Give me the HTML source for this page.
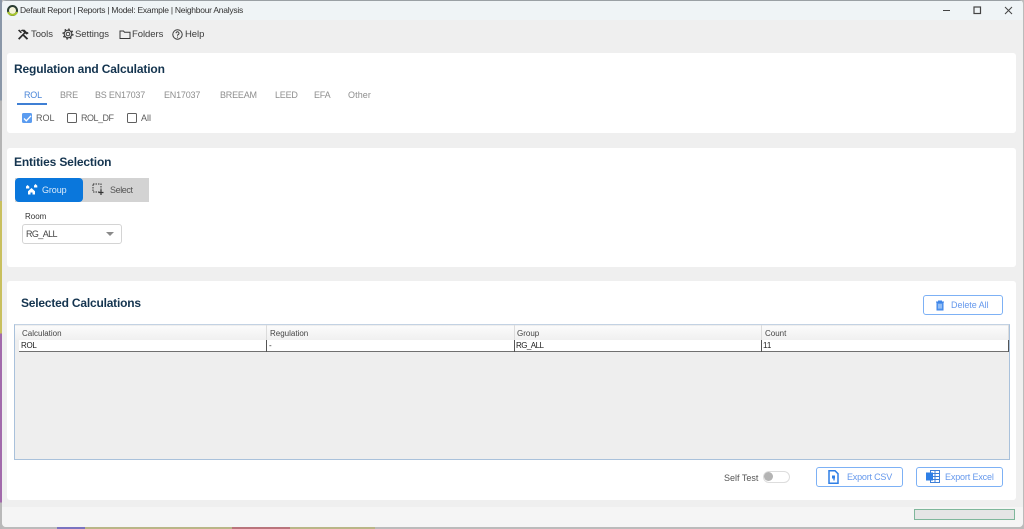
<!DOCTYPE html>
<html><head><meta charset="utf-8"><style>
html,body{margin:0;padding:0;width:1024px;height:529px;overflow:hidden;background:#bbb;font-family:"Liberation Sans",sans-serif}
.a{position:absolute;white-space:nowrap}
.card{position:absolute;left:7px;width:1009px;background:#fff;border-radius:3px}
.h{position:absolute;font-weight:bold;font-size:12px;letter-spacing:-.15px;color:#14344f;white-space:nowrap}
.tab{position:absolute;top:90px;font-size:9px;letter-spacing:-.2px;color:#8e8e8e;white-space:nowrap}
.cb{position:absolute;top:113px;width:8px;height:8px;border:1.5px solid #5f5f5f;border-radius:1.5px;background:#fff}
.t{position:absolute;font-size:9px;color:#5c5c5c;white-space:nowrap}
.m{position:absolute;top:29px;font-size:9.5px;letter-spacing:-.05px;color:#3c3c3c;white-space:nowrap}
.btn{position:absolute;background:#fff;border:1.2px solid #7db1f5;border-radius:3px;box-sizing:border-box;height:20px;color:#6598ec;font-size:9px;letter-spacing:-.05px;line-height:18px}
.th{position:absolute;top:329px;font-size:8px;color:#444;white-space:nowrap}
.td{position:absolute;top:341px;font-size:8px;letter-spacing:-.3px;color:#222;white-space:nowrap}
.v{position:absolute;width:1px;background:#555;top:340px;height:12px}
.vh{position:absolute;width:1px;background:#dcdcdc;top:325px;height:15px}
svg{position:absolute}
</style></head><body>
<div class="a" style="left:0;top:0;width:2px;height:529px;background:linear-gradient(#8a97a8 0,#8a97a8 19%,#b4b4b4 19%,#b4b4b4 38%,#c9c05e 38%,#c9c05e 63%,#a26aab 63%,#a26aab 95%,#b9b9b9 95%)"></div>
<div class="a" style="left:57px;top:527px;width:28px;height:2px;background:#7a74c0"></div>
<div class="a" style="left:85px;top:527px;width:147px;height:2px;background:#b9b687"></div>
<div class="a" style="left:232px;top:527px;width:58px;height:2px;background:#b9757c"></div>
<div class="a" style="left:290px;top:527px;width:85px;height:2px;background:#b9b687"></div>
<div class="a" style="left:2px;top:0;width:1021px;height:527px;background:#efefef;border-radius:4px;overflow:hidden">
  <div class="a" style="left:0;top:0;width:1021px;height:20px;background:#eff4f6;border-top:1px solid #9aa0a4;box-sizing:border-box"></div>
  <div class="a" style="left:0;top:507px;width:1021px;height:20px;background:#f5f5f5"></div>
</div>
<svg style="left:6px;top:4px" width="13" height="13" viewBox="0 0 13 13"><circle cx="6.500" cy="6.500" r="4.500" fill="#f3f3d8" stroke="#2a3d33" stroke-width="2"/><path d="M2 8a5 5 0 0 0 9 0" fill="none" stroke="#a8c92a" stroke-width="2"/></svg>
<div class="a" style="left:20px;top:5px;font-size:8.500px;letter-spacing:-.26px;color:#333">Default Report | Reports | Model: Example | Neighbour Analysis</div>
<svg style="left:940px;top:5px" width="75" height="12" viewBox="0 0 75 12" fill="none" stroke="#444"><path d="M3 5.500h7"/><rect x="34" y="2" width="6.500" height="6.500" stroke-width="1.200"/><path d="M65 2l7 7M72 2l-7 7" stroke-width="1"/></svg>

<svg style="left:17px;top:29px" width="12" height="11" viewBox="0 0 12 11" fill="#2c2c2c"><path d="M1 9.500L7 3.500 5.800 2.300 3.500 1.800 5 .6 7.600.8 10 3.200l1-.2L11.500 4.500 9.500 5.500 8.200 4.500 2.300 10.700z"/><path d="M5 6l1.200-1.200 5 4.700-1.400 1.300zM1 1.500L2.200.5 5 3.200 3.800 4.300z"/></svg>
<div class="m" style="left:31px">Tools</div>
<svg style="left:62px;top:28px" width="12" height="12" viewBox="0 0 12 12" fill="none" stroke="#383838"><circle cx="6" cy="6" r="1.800"/><circle cx="6" cy="6" r="3.800" stroke-width="1.100"/><circle cx="6" cy="6" r="4.900" stroke-width="1.300" stroke-dasharray="1.700 2.150"/></svg>
<div class="m" style="left:75px">Settings</div>
<svg style="left:119px;top:29px" width="12" height="11" viewBox="0 0 12 11" fill="none" stroke="#383838"><path d="M1 9.500V2h3.500l1 1.200H11v6.300z"/></svg>
<div class="m" style="left:132px">Folders</div>
<svg style="left:172px;top:29px" width="11" height="11" viewBox="0 0 11 11" fill="none" stroke="#383838"><circle cx="5.500" cy="5.500" r="4.700"/><path d="M4 4.200a1.500 1.500 0 1 1 2.200 1.400c-.5.3-.7.6-.7 1.100M5.500 7.600v1"/></svg>
<div class="m" style="left:185px">Help</div>

<div class="card" style="top:53px;height:80px"></div>
<div class="h" style="left:14px;top:62px">Regulation and Calculation</div>
<div class="tab" style="left:24px;color:#4b86d8">ROL</div>
<div class="a" style="left:17px;top:103px;width:30px;height:1.500px;background:#3f7fd4"></div>
<div class="tab" style="left:60px">BRE</div>
<div class="tab" style="left:95px">BS EN17037</div>
<div class="tab" style="left:164px">EN17037</div>
<div class="tab" style="left:220px">BREEAM</div>
<div class="tab" style="left:275px">LEED</div>
<div class="tab" style="left:314px">EFA</div>
<div class="tab" style="left:348px;letter-spacing:.1px">Other</div>
<div class="cb" style="left:22px;background:#5b9cf0;border-color:#5b9cf0"></div>
<svg style="left:23px;top:114px" width="9" height="9" viewBox="0 0 9 9" fill="none" stroke="#fff" stroke-width="1.300"><path d="M1 4.500l2.300 2.300L8 1.800"/></svg>
<div class="t" style="left:36px;top:113px">ROL</div>
<div class="cb" style="left:67px"></div>
<div class="t" style="left:81px;top:113px;letter-spacing:-.5px">ROL_DF</div>
<div class="cb" style="left:127px"></div>
<div class="t" style="left:141px;top:113px">All</div>

<div class="card" style="top:148px;height:119px"></div>
<div class="h" style="left:14px;top:155px">Entities Selection</div>
<div class="a" style="left:15px;top:178px;width:134px;height:24px;background:#d3d3d3"></div>
<div class="a" style="left:15px;top:178px;width:68px;height:24px;background:#0a77dc;border-radius:4px"></div>
<svg style="left:25px;top:183px" width="13" height="12" viewBox="0 0 13 12" fill="#fff"><path d="M6.500 5L10 8.200V11.500H7.500V9.500H5.500V11.500H3V8.200zM2.500 2L4.300 3.600V5.500H1V3.500zM10.500 1L12.300 2.700V4.500H9V2.600z"/></svg>
<div class="a" style="left:42px;top:185px;font-size:9px;letter-spacing:-.1px;color:#dcebfa">Group</div>
<svg style="left:92px;top:183px" width="13" height="13" viewBox="0 0 13 13" fill="none" stroke="#333"><rect x="1" y="1" width="8" height="8" stroke-dasharray="1.500 1"/><path d="M9 7v5M6.500 9.500h5" stroke-width="1.200"/></svg>
<div class="a" style="left:110px;top:185px;font-size:9px;letter-spacing:-.4px;color:#555">Select</div>
<div class="a" style="left:25px;top:212px;font-size:8px;color:#333">Room</div>
<div class="a" style="left:22px;top:224px;width:100px;height:20px;box-sizing:border-box;background:#fff;border:1px solid #d4d4d4;border-radius:3px"></div>
<div class="a" style="left:26px;top:229px;font-size:9px;letter-spacing:-.6px;color:#444">RG_ALL</div>
<div class="a" style="left:106px;top:232px;width:0;height:0;border-left:4px solid transparent;border-right:4px solid transparent;border-top:4px solid #8a8a8a"></div>

<div class="card" style="top:281px;height:219px"></div>
<div class="h" style="left:21px;top:296px;letter-spacing:-.2px">Selected Calculations</div>
<div class="btn" style="left:923px;top:295px;width:80px;padding-left:27px">Delete All</div>
<svg style="left:935px;top:300px" width="10" height="11" viewBox="0 0 10 11" fill="#5a9aef" stroke="#3f86e8"><path d="M1 2h8M3.500 2V1h3v1M2 2.500h6v7.500H2z"/><path d="M4 4v4.500M6 4v4.500" stroke="#cfe2fa"/></svg>

<div class="a" style="left:14px;top:324px;width:996px;height:136px;box-sizing:border-box;background:#eeeeee;border:1px solid #a9c1db;border-top:1.500px solid #c3d2e3"></div>
<div class="a" style="left:15px;top:325.500px;width:994px;height:14.500px;background:linear-gradient(#fbfbfb,#f0f0f0)"></div>
<div class="a" style="left:19px;top:340px;width:990px;height:11px;background:#fff;border-bottom:1.500px solid #707070"></div>
<div class="vh" style="left:266px"></div><div class="vh" style="left:514px"></div><div class="vh" style="left:761px"></div><div class="vh" style="left:1008px"></div>
<div class="v" style="left:266px"></div><div class="v" style="left:514px"></div><div class="v" style="left:761px"></div><div class="v" style="left:1008px"></div>
<div class="th" style="left:22px">Calculation</div>
<div class="th" style="left:270px">Regulation</div>
<div class="th" style="left:517px">Group</div>
<div class="th" style="left:765px">Count</div>
<div class="td" style="left:21px">ROL</div>
<div class="td" style="left:269px">-</div>
<div class="td" style="left:516px;letter-spacing:-.55px">RG_ALL</div>
<div class="td" style="left:763px;letter-spacing:0">11</div>

<div class="t" style="left:724px;top:473px;color:#555">Self Test</div>
<div class="a" style="left:763px;top:471px;width:27px;height:12px;box-sizing:border-box;background:#fff;border:1px solid #ddd;border-radius:6px"></div>
<div class="a" style="left:764px;top:472px;width:9px;height:9px;border-radius:5px;background:#b4b4b4"></div>
<div class="btn" style="left:816px;top:467px;width:87px;padding-left:30px;letter-spacing:-.2px">Export CSV</div>
<svg style="left:828px;top:470px" width="11" height="14" viewBox="0 0 11 14"><path d="M1 .7h6l3 3v9.600H1z" fill="#fff" stroke="#2f7fe6" stroke-width="1.500"/><rect x="4" y="5.500" width="3" height="3" fill="#2f7fe6"/><path d="M6 8v2.500" stroke="#2f7fe6" stroke-width="1.300"/></svg>
<div class="btn" style="left:916px;top:467px;width:87px;padding-left:28px;letter-spacing:-.15px">Export Excel</div>
<svg style="left:925.500px;top:470px" width="14" height="13" viewBox="0 0 14 13" fill="none" stroke="#3f80d8"><rect x="4.500" y=".5" width="9" height="12" fill="#fff"/><path d="M4.500 3.500h9M4.500 6.500h9M4.500 9.500h9M9 .5v12"/><rect x="0" y="2.500" width="7" height="8" fill="#2f7fe6" stroke="none"/></svg>
<div class="a" style="left:914px;top:509px;width:101px;height:11px;box-sizing:border-box;background:#e5e5e5;border:1px solid #7fb79b"></div>
</body></html>
